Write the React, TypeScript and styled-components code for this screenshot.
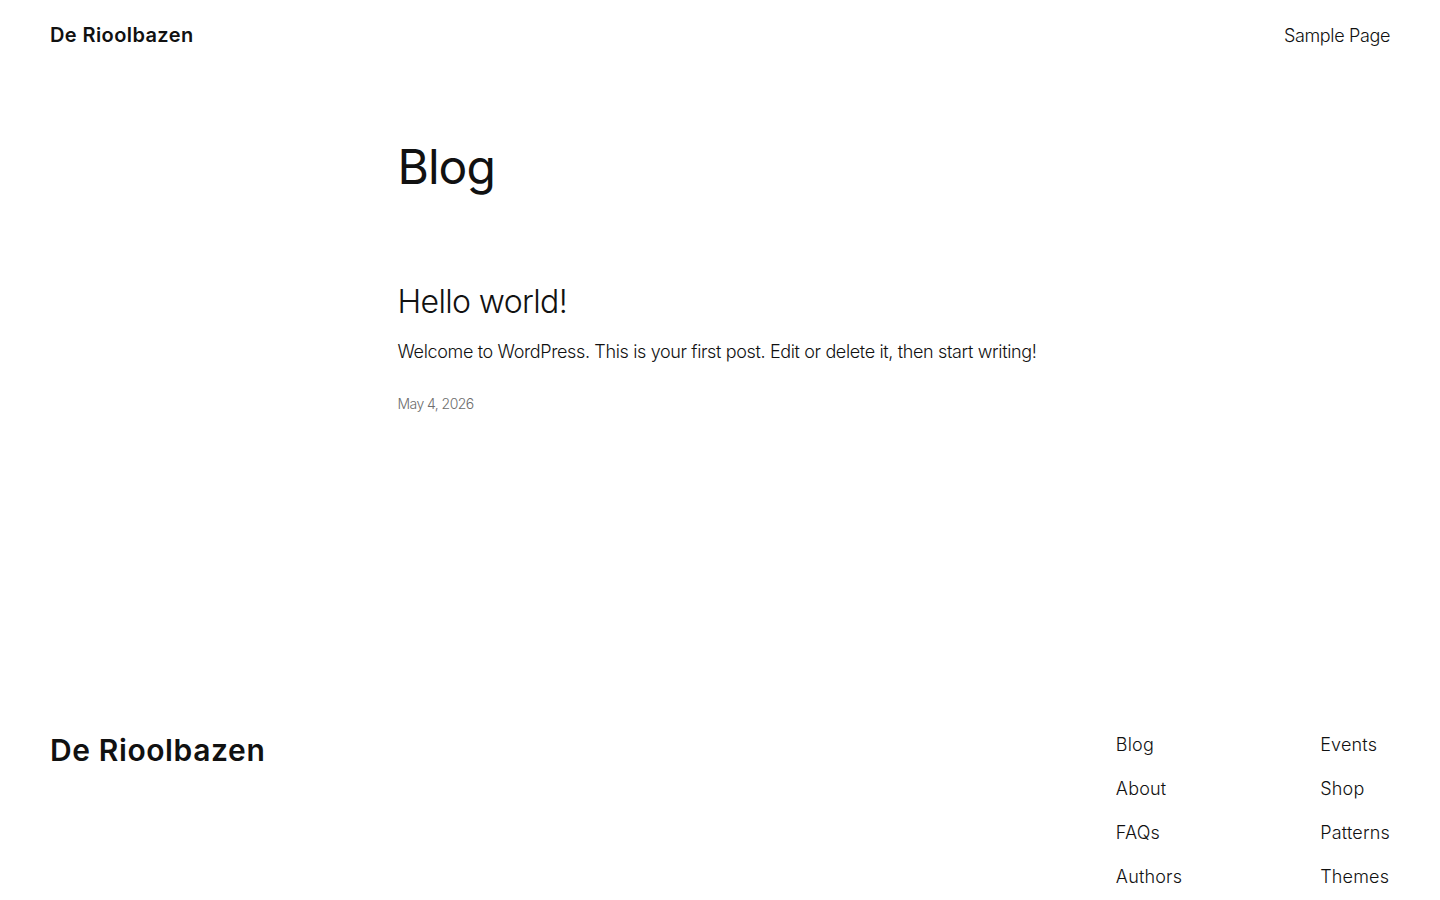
import React from 'react';
import styled, { createGlobalStyle } from 'styled-components';

const GlobalStyle = createGlobalStyle`
    html, body {
        margin: 0;
        padding: 0;
        background: #fff;
    }

    body {
        font-family: Inter, 'Noto Sans', 'Liberation Sans', sans-serif;
        color: #111111;
        -webkit-font-smoothing: antialiased;
    }
`;

const Page = styled.div`
    display: flex;
    flex-direction: column;
`;

const Header = styled.header`
    height: 70px;
    padding: 0 50px;

    display: flex;
    align-items: center;
    justify-content: space-between;
`;

const SiteTitle = styled.a<{ size: number }>`
    color: #111111;
    font-size: ${({ size }) => size}px;
    font-weight: 600;
    line-height: 1.2;
    letter-spacing: 0.02em;
    text-decoration: none;
`;

const HeaderNav = styled.a`
    color: #111111;
    font-size: 18px;
    font-weight: 300;
    letter-spacing: -0.02em;
    text-decoration: none;
`;

const Main = styled.main`
    width: 645px;
    margin: 0 auto;
    padding-top: 68px;
`;

const PageTitle = styled.h1`
    margin: 0;
    font-size: 48px;
    font-weight: 400;
    line-height: 1.2;
    letter-spacing: -0.02em;
`;

const Post = styled.article`
    margin-top: 87px;
`;

const PostTitle = styled.h2`
    margin: 0;
    font-size: 32px;
    font-weight: 300;
    line-height: 1.2;
    letter-spacing: -0.02em;
`;

const Excerpt = styled.p`
    margin: 18px 0 0;
    font-size: 18px;
    font-weight: 300;
    line-height: 1.4;
    letter-spacing: -0.02em;
`;

const PostDate = styled.time`
    display: block;
    margin-top: 31px;
    color: #6d6d6d;
    font-size: 14px;
    font-weight: 300;
    line-height: 17px;
    letter-spacing: -0.04em;
`;

const Footer = styled.footer`
    padding: 0 50px;
    margin-top: 320px;

    display: flex;
    justify-content: space-between;
    align-items: flex-start;
`;

const FooterNav = styled.div`
    display: flex;
    gap: 138px;
`;

const NavColumn = styled.ul`
    margin: 0;
    padding: 0;
    list-style: none;

    display: flex;
    flex-direction: column;
    gap: 19px;
`;

const NavItem = styled.li`
    font-size: 18px;
    font-weight: 300;
    line-height: 25px;
    letter-spacing: 0.01em;
`;

const columns = [
    ['Blog', 'About', 'FAQs', 'Authors'],
    ['Events', 'Shop', 'Patterns', 'Themes'],
];

export default function App() {
    return (
        <>
            <GlobalStyle />
            <Page>
                <Header>
                    <SiteTitle size={20} href="#">
                        De Rioolbazen
                    </SiteTitle>
                    <HeaderNav href="#">Sample Page</HeaderNav>
                </Header>

                <Main>
                    <PageTitle>Blog</PageTitle>
                    <Post>
                        <PostTitle>Hello world!</PostTitle>
                        <Excerpt>
                            Welcome to WordPress. This is your first post. Edit or delete it, then start
                            writing!
                        </Excerpt>
                        <PostDate>May 4, 2026</PostDate>
                    </Post>
                </Main>

                <Footer>
                    <SiteTitle size={30} href="#">
                        De Rioolbazen
                    </SiteTitle>
                    <FooterNav>
                        {columns.map((col, i) => (
                            <NavColumn key={i}>
                                {col.map((item) => (
                                    <NavItem key={item}>{item}</NavItem>
                                ))}
                            </NavColumn>
                        ))}
                    </FooterNav>
                </Footer>
            </Page>
        </>
    );
}
